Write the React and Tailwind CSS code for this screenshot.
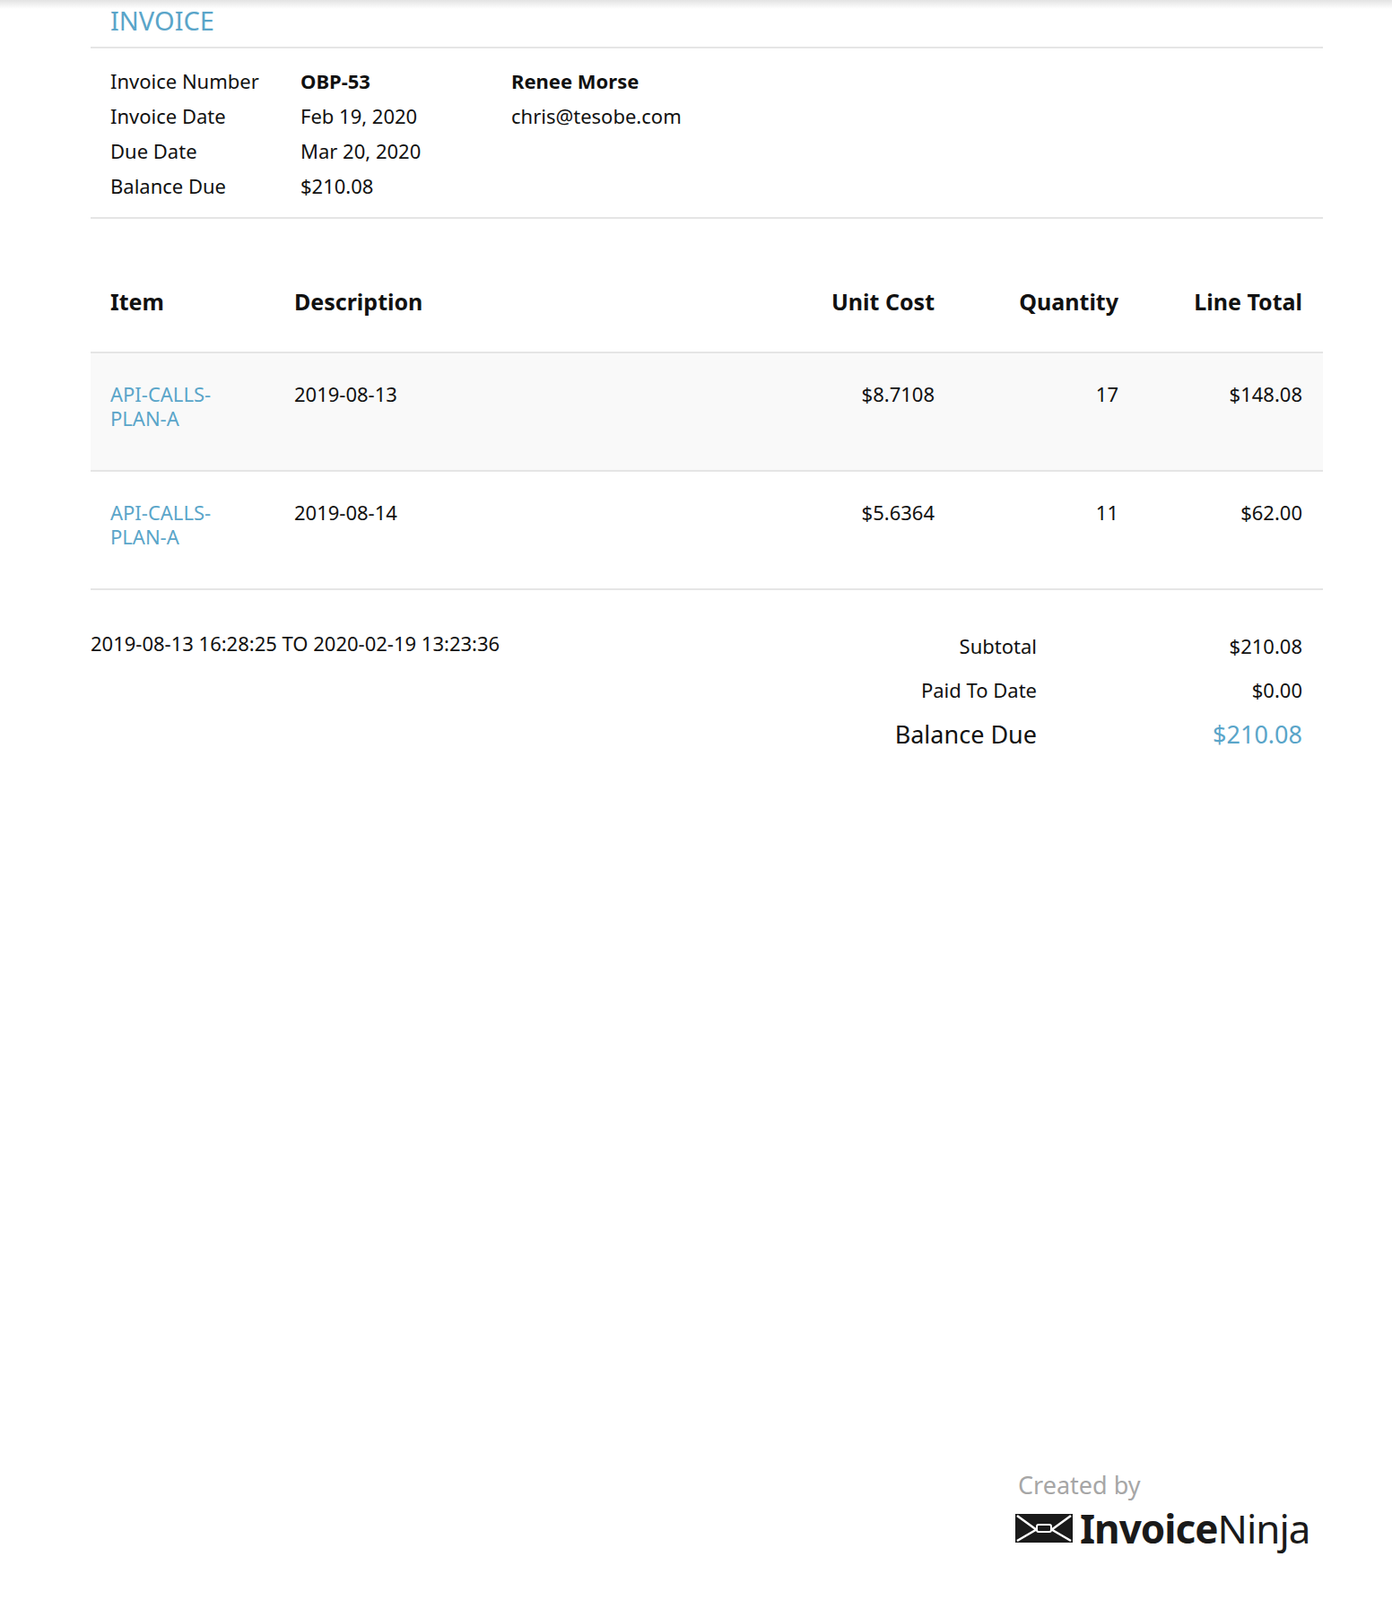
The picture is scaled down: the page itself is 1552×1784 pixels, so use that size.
export default function App() {
  const items = [
    { item: 'API-CALLS-\nPLAN-A', desc: '2019-08-13', cost: '$8.7108', qty: '17', total: '$148.08', bg: 'bg-[#f9f9f9]' },
    { item: 'API-CALLS-\nPLAN-A', desc: '2019-08-14', cost: '$5.6364', qty: '11', total: '$62.00', bg: 'bg-white' },
  ];
  return (
    <div className="relative w-[1552px] h-[1784px] bg-white text-[#111] font-[Roboto,'Liberation_Sans',Arial,sans-serif] overflow-hidden">
      <div className="absolute top-0 left-0 right-0 h-[10px] bg-gradient-to-b from-[#e3e3e3] to-white" />
      <div className="ml-[101px] w-[1374px]">
        <div className="h-[54px] border-b-2 border-[#e5e5e5] pl-[22px] pt-[4px] text-[29px] leading-[38px] text-[#5aa5c9]">INVOICE</div>
        <div className="flex pl-[22px] pt-[17px] pb-[15px] border-b-2 border-[#e5e5e5] text-[22px] leading-[39px]">
          <div className="w-[212px]">
            <div>Invoice Number</div>
            <div>Invoice Date</div>
            <div>Due Date</div>
            <div>Balance Due</div>
          </div>
          <div className="w-[235px]">
            <div className="font-bold">OBP-53</div>
            <div>Feb 19, 2020</div>
            <div>Mar 20, 2020</div>
            <div>$210.08</div>
          </div>
          <div>
            <div className="font-bold">Renee Morse</div>
            <div>chris@tesobe.com</div>
          </div>
        </div>
        <div className="mt-[52px] flex items-center h-[98px] pb-[14px] border-b-2 border-[#e5e5e5] text-[25px] font-bold pr-[23px]">
          <div className="w-[227px] pl-[22px]">Item</div>
          <div className="flex-1">Description</div>
          <div className="w-[200px] text-right">Unit Cost</div>
          <div className="w-[205px] text-right">Quantity</div>
          <div className="w-[205px] text-right">Line Total</div>
        </div>
        {items.map((r, i) => (
          <div key={i} className={`flex items-start h-[132px] pt-[32px] border-b-2 border-[#e5e5e5] text-[22px] leading-[27px] pr-[23px] ${r.bg}`}>
            <div className="w-[227px] pl-[22px] whitespace-pre-line text-[#5aa5c9]">{r.item}</div>
            <div className="flex-1">{r.desc}</div>
            <div className="w-[200px] text-right">{r.cost}</div>
            <div className="w-[205px] text-right">{r.qty}</div>
            <div className="w-[205px] text-right">{r.total}</div>
          </div>
        ))}
        <div className="flex pt-[46px] pr-[23px]">
          <div className="flex-1 text-[22px] leading-[27px]">2019-08-13 16:28:25 TO 2020-02-19 13:23:36</div>
          <div className="text-[22px]">
            <div className="flex leading-[49px] mt-[-8px]"><div className="w-[300px] text-right">Subtotal</div><div className="w-[296px] text-right">$210.08</div></div>
            <div className="flex leading-[49px]"><div className="w-[300px] text-right">Paid To Date</div><div className="w-[296px] text-right">$0.00</div></div>
            <div className="flex leading-[49px] text-[27px]"><div className="w-[300px] text-right">Balance Due</div><div className="w-[296px] text-right text-[#5aa5c9]">$210.08</div></div>
          </div>
        </div>
      </div>
      <div className="absolute left-[1132px] top-[1638px]">
        <div className="pl-[3px] text-[27px] leading-[36px] text-[#a6a6a6]">Created by</div>
        <div className="flex items-center gap-[8px] mt-[2px]">
          <svg width="64" height="36" viewBox="0 0 64 36">
            <rect x="0" y="2" width="64" height="32" fill="#1a1a1a" />
            <path d="M2 4 L24 20 M62 4 L40 20 M2 32 L26 18 M62 32 L38 18" stroke="#fff" strokeWidth="2.5" />
            <rect x="24" y="14" width="16" height="8" rx="2" fill="#1a1a1a" stroke="#fff" strokeWidth="2" />
          </svg>
          <div className="text-[44px] leading-[56px] text-[#1a1a1a] font-['Open_Sans',sans-serif] tracking-[-1px]">
            <span className="font-bold">Invoice</span><span>Ninja</span>
          </div>
        </div>
      </div>
    </div>
  );
}
